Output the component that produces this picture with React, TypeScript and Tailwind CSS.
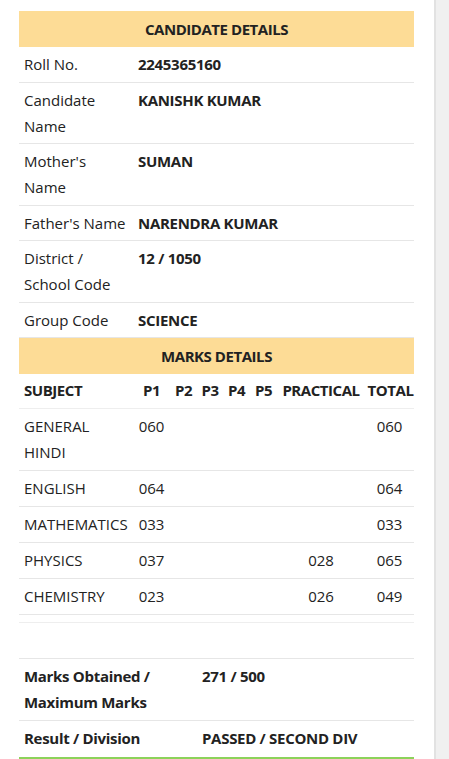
import React from "react";

const font = { fontFamily: '"Open Sans", "Noto Sans", sans-serif' };

function InfoRow({ label, value }: { label: React.ReactNode; value: string }) {
  return (
    <div className="flex border-b border-[#e6e6e6] pt-[4px] pb-[4.5px] text-[15px] leading-[26px] text-[#222]">
      <div className="w-[119px] shrink-0 pl-[5px] pr-[5px]">{label}</div>
      <div className="flex-1 font-bold tracking-[-0.3px]">{value}</div>
    </div>
  );
}

const cols = "grid grid-cols-[114px_37px_27px_26px_27px_27px_88px_49px]";

function MarkRow({ s, p1, pr, t }: { s: React.ReactNode; p1: string; pr: string; t: string }) {
  return (
    <div className={`${cols} border-b border-[#e6e6e6] pt-[4px] pb-[5px] text-[15px] leading-[26px] text-[#222]`}>
      <div className="pl-[5px]">{s}</div>
      <div className="text-center">{p1}</div>
      <div></div>
      <div></div>
      <div></div>
      <div></div>
      <div className="text-center">{pr}</div>
      <div className="text-center">{t}</div>
    </div>
  );
}

export default function App() {
  return (
    <div className="flex min-h-[759px] w-[449px] bg-white" style={font}>
      <div className="w-[434px] shrink-0 pl-[19px] pr-[20px] pt-[11px]">
        <div className="flex h-[36px] items-center justify-center bg-[#fddc96] text-[15px] font-bold text-[#222] tracking-[-0.45px]">
          CANDIDATE DETAILS
        </div>
        <InfoRow label="Roll No." value="2245365160" />
        <InfoRow label={<>Candidate<br />Name</>} value="KANISHK KUMAR" />
        <InfoRow label={<>Mother's<br />Name</>} value="SUMAN" />
        <InfoRow label={<span className="whitespace-nowrap">Father's Name</span>} value="NARENDRA KUMAR" />
        <InfoRow label={<>District /<br />School Code</>} value="12 / 1050" />
        <InfoRow label="Group Code" value="SCIENCE" />
        <div className="flex h-[36px] items-center justify-center bg-[#fddc96] text-[15px] font-bold text-[#222] tracking-[-0.45px]">
          MARKS DETAILS
        </div>
        <div className={`${cols} border-b border-[#eeeeee] pt-[3px] pb-[5px] text-[15px] font-bold leading-[26px] text-[#222] tracking-[-0.45px]`}>
          <div className="pl-[5px]">SUBJECT</div>
          <div className="text-center">P1</div>
          <div className="text-center">P2</div>
          <div className="text-center">P3</div>
          <div className="text-center">P4</div>
          <div className="text-center">P5</div>
          <div className="text-center whitespace-nowrap">PRACTICAL</div>
          <div className="text-center whitespace-nowrap pl-[2px]">TOTAL</div>
        </div>
        <MarkRow s={<>GENERAL<br />HINDI</>} p1="060" pr="" t="060" />
        <MarkRow s="ENGLISH" p1="064" pr="" t="064" />
        <MarkRow s={<span className="whitespace-nowrap">MATHEMATICS</span>} p1="033" pr="" t="033" />
        <MarkRow s="PHYSICS" p1="037" pr="028" t="065" />
        <MarkRow s="CHEMISTRY" p1="023" pr="026" t="049" />
        <div className="h-[8px] border-b border-[#eeeeee]"></div>
        <div className="h-[36px] border-b border-[#e6e6e6]"></div>
        <div className="flex border-b border-[#e6e6e6] pt-[4px] pb-[5px] text-[15px] font-bold leading-[26px] text-[#222] tracking-[-0.3px]">
          <div className="w-[183px] shrink-0 pl-[5px]">Marks Obtained /<br />Maximum Marks</div>
          <div className="flex-1">271 / 500</div>
        </div>
        <div className="flex border-b-[2px] border-[#8cd25a] pt-[4px] pb-[6px] text-[15px] font-bold leading-[26px] text-[#222] tracking-[-0.3px]">
          <div className="w-[183px] shrink-0 pl-[5px]">Result / Division</div>
          <div className="flex-1">PASSED / SECOND DIV</div>
        </div>
      </div>
      <div className="flex-1 border-l-[2px] border-[#e2e2e2] bg-[#f0f0f0]"></div>
    </div>
  );
}
